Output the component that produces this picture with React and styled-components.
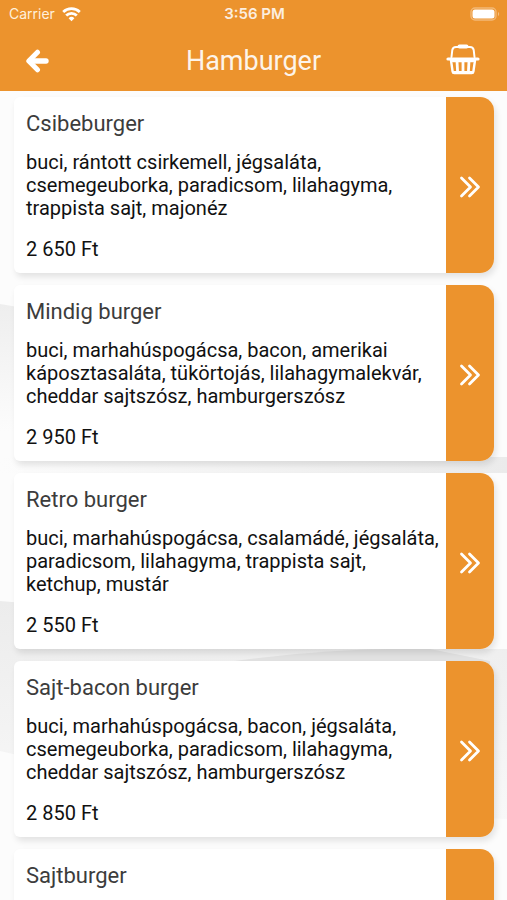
import React from 'react';
import styled, { createGlobalStyle } from 'styled-components';

const GlobalStyle = createGlobalStyle`
    * {
        box-sizing: border-box;
    }

    body {
        margin: 0;
        font-family: Roboto, sans-serif;
        background: #fcfcfc;
    }
`;

const Screen = styled.div`
    display: flex;
    flex-direction: column;
    height: 100vh;
    overflow: hidden;
`;

const Header = styled.header`
    background: #ec932d;
    color: white;
`;

const StatusBar = styled.div`
    display: grid;
    grid-template-columns: 1fr auto 1fr;
    align-items: center;
    height: 28px;
    padding: 0 7px 0 9px;
    font-family: Inter, sans-serif;
    font-size: 14px;
    line-height: 20px;
`;

const Carrier = styled.span`
    display: flex;
    align-items: center;
    gap: 7px;
    color: #fff0dc;
`;

const Clock = styled.span`
    font-size: 15px;
    font-weight: 600;
    opacity: 0.85;
`;

const Battery = styled.svg`
    justify-self: end;
`;

const NavBar = styled.nav`
    display: grid;
    grid-template-columns: 62px 1fr 62px;
    align-items: center;
    height: 63px;
    padding: 2px 13px 0;
`;

const IconButton = styled.button`
    display: flex;
    align-items: center;
    justify-content: center;
    width: 48px;
    height: 48px;
    padding: 0;
    border: none;
    background: none;
    color: white;
    cursor: pointer;
`;

const CartButton = styled(IconButton)`
    width: 62px;
    padding-bottom: 4px;
`;

const Title = styled.h1`
    margin: 0;
    font-size: 27px;
    line-height: 32px;
    font-weight: 400;
    text-align: center;
    opacity: 0.9;
`;

const Content = styled.main`
    position: relative;
    flex: 1;
    min-height: 0;
`;

const Backdrop = styled.svg`
    position: absolute;
    width: 100%;
    height: 100%;
`;

const List = styled.ul`
    position: relative;
    display: flex;
    flex-direction: column;
    gap: 12px;
    height: 100%;
    margin: 0;
    padding: 6px 13px 6px 14px;
    list-style: none;
    overflow-y: auto;
    scrollbar-width: none;
`;

const Card = styled.li`
    display: flex;
    flex-shrink: 0;
    min-height: 176px;
    background: white;
    border-radius: 6px 14px 14px 6px;
    box-shadow: 2px 4px 6px rgba(0, 0, 0, 0.1);
`;

const CardBody = styled.div`
    flex: 1;
    padding: 13px 6px 12px 12px;
`;

const Name = styled.h2`
    margin: 0 0 13px;
    color: #3c3c3c;
    font-size: 22px;
    line-height: 28px;
    font-weight: 400;
`;

const Text = styled.p`
    margin: 0 0 18px;
    color: #111;
    font-size: 20px;
    line-height: 23px;

    &:last-child {
        margin: 0;
    }
`;

const OpenButton = styled(IconButton)`
    height: auto;
    padding-top: 3px;
    background: #ec932d;
    border-radius: 0 14px 14px 0;
`;

const burgers = [
    {
        name: 'Csibeburger',
        description: 'buci, rántott csirkemell, jégsaláta, csemegeuborka, paradicsom, lilahagyma, trappista sajt, majonéz',
        price: '2 650 Ft',
    },
    {
        name: 'Mindig burger',
        description: 'buci, marhahúspogácsa, bacon, amerikai káposztasaláta, tükörtojás, lilahagymalekvár, cheddar sajtszósz, hamburgerszósz',
        price: '2 950 Ft',
    },
    {
        name: 'Retro burger',
        description: 'buci, marhahúspogácsa, csalamádé, jégsaláta, paradicsom, lilahagyma, trappista sajt, ketchup, mustár',
        price: '2 550 Ft',
    },
    {
        name: 'Sajt-bacon burger',
        description: 'buci, marhahúspogácsa, bacon, jégsaláta, csemegeuborka, paradicsom, lilahagyma, cheddar sajtszósz, hamburgerszósz',
        price: '2 850 Ft',
    },
    { name: 'Sajtburger' },
];

const WifiIcon = () => (
    <svg width="19" height="15" viewBox="0 0 19 15" fill="none" stroke="white" strokeWidth="2.8">
        <path d="M1.2 5a12 12 0 0 1 16.6 0" />
        <path d="M4.2 8.6a7.6 7.6 0 0 1 10.6 0" />
        <path d="M9.5 14.2l-2.9-3a4.2 4.2 0 0 1 5.8 0z" fill="white" stroke="none" />
    </svg>
);

const BatteryIcon = () => (
    <Battery width="30" height="14" viewBox="0 0 30 14">
        <rect x="1" y="1" width="25" height="12" rx="4" fill="none" stroke="white" strokeOpacity="0.35" strokeWidth="1.4" />
        <rect x="2.5" y="2.5" width="22" height="9" rx="2.5" fill="white" />
        <path d="M28 5v4c1.6-.6 1.6-3.4 0-4z" fill="white" fillOpacity="0.4" />
    </Battery>
);

const ArrowIcon = () => (
    <svg width="24" height="24" viewBox="0 0 24 24" fill="none" stroke="white" strokeLinecap="round" strokeLinejoin="round">
        <path d="M12.5 3.2L3.8 12l8.7 8.8" strokeWidth="5" />
        <path d="M5 12h16" strokeWidth="5.4" />
    </svg>
);

const BasketIcon = () => (
    <svg width="34" height="32" viewBox="0 0 34 32" fill="none" stroke="white" strokeLinecap="round" strokeLinejoin="round">
        <path d="M5.5 14l.8-7Q6.8 4 10 4h14Q27.200 4 27.700 7L28.500 14" strokeWidth="2" />
        <path d="M13.5 3.5h7" strokeWidth="4" />
        <path d="M2 16h30" strokeWidth="3.2" />
        <path d="M4.800 16l1.800 12.500q.2 1.500 1.700 1.500h17.400q1.500 0 1.700-1.500l1.800-12.500" strokeWidth="2.400" />
        <path d="M11 18l.6 11M17 18v11M23 18l-.6 11" strokeWidth="2.800" />
        <path d="M7 18h20M8 29.200h18" strokeWidth="2.400" />
    </svg>
);

const ChevronsIcon = () => (
    <svg width="22" height="22" viewBox="0 0 22 22" fill="none" stroke="white" strokeWidth="2.8" strokeLinecap="round" strokeLinejoin="round">
        <path d="M2.5 2l9 9-9 9" />
        <path d="M10.5 2l9 9-9 9" />
    </svg>
);

function BurgerCard({ name, description, price }) {
    return (
        <Card>
            <CardBody>
                <Name>{name}</Name>
                {description && <Text>{description}</Text>}
                {price && <Text>{price}</Text>}
            </CardBody>
            <OpenButton type="button" aria-label={name}>
                <ChevronsIcon />
            </OpenButton>
        </Card>
    );
}

function App() {
    return (
        <Screen>
            <GlobalStyle />
            <Header>
                <StatusBar>
                    <Carrier>Carrier <WifiIcon /></Carrier>
                    <Clock>3:56 PM</Clock>
                    <BatteryIcon />
                </StatusBar>
                <NavBar>
                    <IconButton type="button" aria-label="Vissza"><ArrowIcon /></IconButton>
                    <Title>Hamburger</Title>
                    <CartButton type="button" aria-label="Kosár"><BasketIcon /></CartButton>
                </NavBar>
            </Header>
            <Content>
                <Backdrop viewBox="0 0 507 809" preserveAspectRatio="none" aria-hidden="true">
                    <defs>
                        <linearGradient id="upper" x1="0" y1="0" x2="0" y2="1">
                            <stop offset="0" stopColor="#eeeeee" />
                            <stop offset="1" stopColor="#fcfcfc" />
                        </linearGradient>
                        <linearGradient id="middle" x1="0" y1="0" x2="1" y2="0">
                            <stop offset="0" stopColor="#fcfcfc" />
                            <stop offset="1" stopColor="#ebebeb" />
                        </linearGradient>
                        <linearGradient id="lower" x1="0" y1="0" x2="0" y2="1">
                            <stop offset="0" stopColor="#ececec" />
                            <stop offset="1" stopColor="#f8f8f8" />
                        </linearGradient>
                    </defs>
                    <path d="M0 213Q100 230 250 250V340H0z" fill="url(#upper)" />
                    <path d="M0 366H507V382H0z" fill="url(#middle)" />
                    <path d="M0 510Q60 512 120 558H507V728Q250 720 0 660z" fill="url(#lower)" />
                    <path d="M220 572Q330 556 430 558L490 570V580H220z" fill="#e2e2e2" />
                </Backdrop>
                <List>
                    {burgers.map(burger => <BurgerCard key={burger.name} {...burger} />)}
                </List>
            </Content>
        </Screen>
    );
}

export default App;
